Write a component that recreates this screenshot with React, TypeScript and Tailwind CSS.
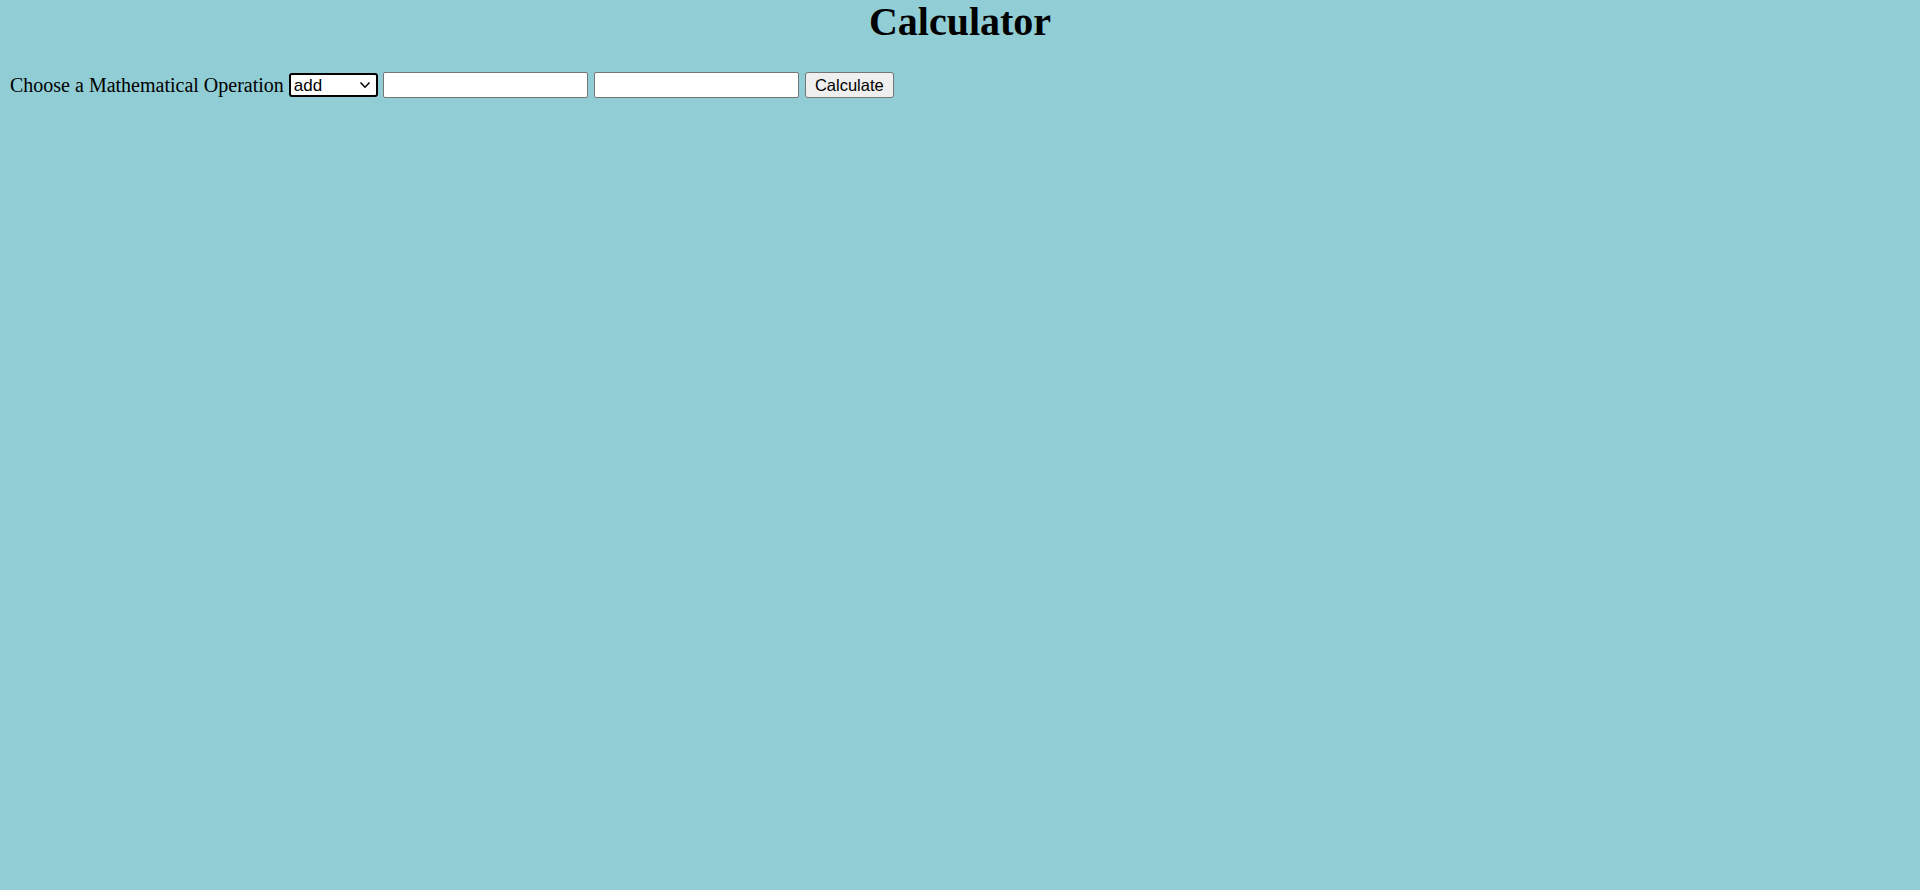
import { useState } from "react";

const App = () => {
  const [op, setOp] = useState("add");

  return (
    <div className="min-h-[890px] w-full bg-[#90cdd4] text-black" style={{ fontFamily: "'Liberation Serif', 'Times New Roman', serif" }}>
      <h1 className="m-0 text-center text-[40px] font-bold leading-[43px]">Calculator</h1>

      <div className="mt-[29px] flex h-[26px] items-center pl-[10px]">
        <label className="text-[20px] leading-[23px]">Choose a Mathematical Operation</label>

        <div className="relative ml-[5px]">
          <select
            value={op}
            onChange={(e) => setOp(e.target.value)}
            className="block h-[24px] w-[89px] appearance-none rounded-[3px] border-2 border-black bg-white pl-[3px] pt-[1px] text-[17px] leading-[19px] outline-none"
            style={{ fontFamily: "'Liberation Sans', Arial, sans-serif" }}
          >
            <option value="add">add</option>
            <option value="subtract">subtract</option>
            <option value="multiply">multiply</option>
            <option value="divide">divide</option>
          </select>
          <svg className="pointer-events-none absolute right-[7px] top-[8px]" width="12" height="8" viewBox="0 0 12 8">
            <path d="M1.5 1.5 L6 6.2 L10.5 1.5" fill="none" stroke="#000" strokeWidth="1.6" />
          </svg>
        </div>

        <input type="text" className="ml-[5px] h-[26px] w-[205px] rounded-[2px] border border-[#767676] bg-white px-1 outline-none" />
        <input type="text" className="ml-[6px] h-[26px] w-[205px] rounded-[2px] border border-[#767676] bg-white px-1 outline-none" />

        <button
          className="ml-[6px] h-[26px] w-[89px] rounded-[3px] border border-[#767676] bg-[#efefef] text-[16.5px] leading-[20px]"
          style={{ fontFamily: "'Liberation Sans', Arial, sans-serif" }}
        >
          Calculate
        </button>
      </div>
    </div>
  );
};

export default App;
